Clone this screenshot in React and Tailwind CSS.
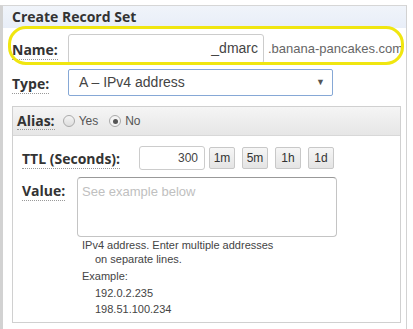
export default function App() {
  const label = "font-bold text-[#333] text-[14px] font-['Open_Sans',sans-serif] border-b border-dotted border-[#999] leading-[16px]";
  const arial = "font-['Liberation_Sans',Arial,sans-serif]";
  return (
    <div className="relative w-[413px] h-[329px] overflow-hidden bg-white">
      <div className="mt-[5px] w-[407px] h-[330px] border-l-[3px] border-t border-r border-[#d2d2d2] border-t-[#d6d6d6] bg-white">
        <div className="h-[22px] bg-gradient-to-b from-[#f0f4fa] to-[#e8eef8] pl-[9px] pt-[3px] text-[14px] font-bold text-[#333] font-['Open_Sans',sans-serif] leading-[16px]">
          Create Record Set
        </div>

        {/* name row */}
        <div className="relative flex items-center h-[31px] mt-[5px] pl-[9px]">
          <span className="w-[56px] shrink-0">
            <span className={label}>Name:</span>
          </span>
          <div className={`w-[196px] h-[30px] border border-[#ccc] rounded-[3px] bg-white flex items-center justify-end pr-[5px] text-[14px] text-[#444] ${arial}`}>
            _dmarc
          </div>
          <span className={`ml-[4px] whitespace-nowrap text-[13px] text-[#666] ${arial}`}>.banana-pancakes.com</span>
          <div className="absolute left-[5px] top-[-7px] w-[396px] h-[39px] border-[3px] border-[#f0e610] rounded-[18px] pointer-events-none" />
        </div>

        {/* type row */}
        <div className="flex items-center h-[27px] mt-[5px] pl-[9px]">
          <span className="w-[56px] shrink-0">
            <span className={label}>Type:</span>
          </span>
          <div className={`w-[265px] h-[27px] border border-[#86a8d6] rounded-[2px] flex items-center justify-between pl-[10px] pr-[7px] text-[14px] text-[#444] ${arial}`}>
            <span>A – IPv4 address</span>
            <span className="text-[9px] text-[#555]">▼</span>
          </div>
        </div>

        {/* inner box */}
        <div className="mt-[10px] ml-[9px] w-[389px] h-[217px] border border-[#d0d0d0]">
          <div className="h-[29px] bg-gradient-to-b from-[#f5f5f5] to-[#e6e6e6] border-b border-[#d8d8d8] flex items-center pl-[4px]">
            <span className={label}>Alias:</span>
            <span className="ml-[8px] w-[12px] h-[12px] rounded-full border border-[#aaa] bg-gradient-to-b from-[#f4f4f4] to-[#ddd]" />
            <span className={`ml-[4px] text-[12px] text-[#555] ${arial}`}>Yes</span>
            <span className="ml-[11px] w-[12px] h-[12px] rounded-full border border-[#aaa] bg-[#f4f4f4] flex items-center justify-center">
              <span className="w-[5px] h-[5px] rounded-full bg-[#555]" />
            </span>
            <span className={`ml-[4px] text-[12px] text-[#555] ${arial}`}>No</span>
          </div>

          <div className="flex items-center mt-[10px] pl-[9px] h-[24px]">
            <span className="w-[117px] shrink-0">
              <span className={label}>TTL (Seconds):</span>
            </span>
            <div className={`w-[66px] h-[24px] border border-[#ccc] rounded-[3px] flex items-center justify-end pr-[6px] text-[12px] text-[#444] ${arial}`}>
              300
            </div>
            <div className={`flex gap-[7px] ml-[4px] text-[12px] text-[#333] ${arial}`}>
              {['1m', '5m', '1h', '1d'].map((t) => (
                <span key={t} className="w-[26px] h-[22px] border border-[#c8c8c8] rounded-[2px] bg-gradient-to-b from-[#f6f6f6] to-[#e4e4e4] flex items-center justify-center">
                  {t}
                </span>
              ))}
            </div>
          </div>

          <div className="flex mt-[7px] pl-[9px]">
            <span className="w-[55px] shrink-0 pt-[1px]">
              <span className={label}>Value:</span>
            </span>
            <div>
              <div className={`w-[260px] h-[60px] border border-[#c4c4c4] border-t-[#999] rounded-[4px] pl-[4px] pt-[4px] text-[13px] text-[#c0c0c0] ${arial}`}>
                See example below
              </div>
              <div className={`pl-[5px] text-[11px] text-[#444] ${arial}`}>
                <div className="leading-[14px] pt-[1px]">
                  <div>IPv4 address. Enter multiple addresses</div>
                  <div className="pl-[13px]">on separate lines.</div>
                </div>
                <div className="leading-[16.5px] mt-[2px]">
                  <div>Example:</div>
                  <div className="pl-[13px]">192.0.2.235</div>
                  <div className="pl-[13px]">198.51.100.234</div>
                </div>
              </div>
            </div>
          </div>
        </div>
      </div>
    </div>
  );
}
